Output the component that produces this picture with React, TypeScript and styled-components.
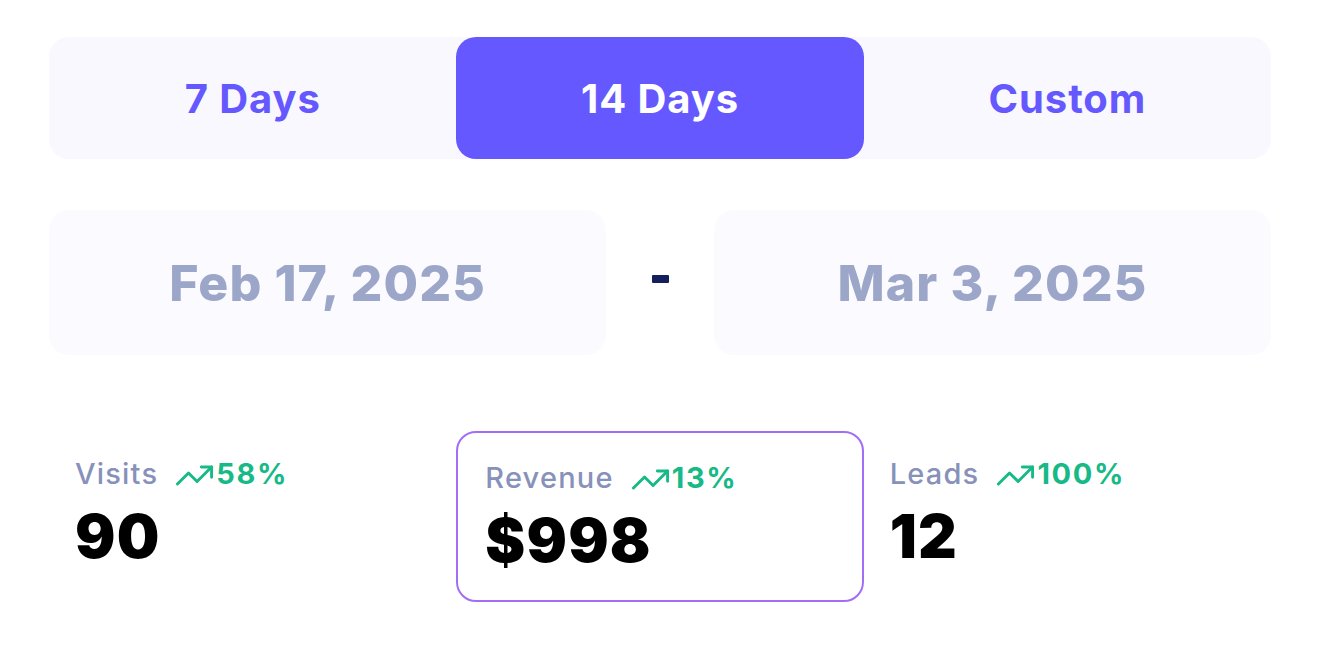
import * as React from "react";
import styled, { createGlobalStyle } from "styled-components";

const GlobalStyle = createGlobalStyle`
  html, body {
    margin: 0;
    padding: 0;
    background: #ffffff;
  }
  body {
    font-family: "Inter", "Noto Sans", sans-serif;
  }
`;

const Page = styled.div`
  display: flex;
  flex-direction: column;
  width: 1222px;
  padding: 37px 0 0 49px;
`;

const TabBar = styled.div`
  display: grid;
  grid-template-columns: repeat(3, 1fr);
  height: 122px;
  background: #f9f8ff;
  border-radius: 20px;
`;

const Tab = styled.div<{ $active?: boolean }>`
  display: flex;
  align-items: center;
  justify-content: center;
  border-radius: 20px;
  font-size: 40px;
  font-weight: 700;
  letter-spacing: 0.9px;
  color: ${(p) => (p.$active ? "#ffffff" : "#6558ff")};
  background: ${(p) => (p.$active ? "#6558ff" : "transparent")};
`;

const DateRow = styled.div`
  display: grid;
  grid-template-columns: 1fr 108px 1fr;
  height: 145px;
  margin-top: 51px;
`;

const DateBox = styled.div`
  display: flex;
  align-items: center;
  justify-content: center;
  background: #fafaff;
  border-radius: 20px;
  font-size: 50px;
  font-weight: 800;
  color: #9ca6c8;
  letter-spacing: 1.1px;
`;

const Dash = styled.div`
  display: flex;
  align-items: center;
  justify-content: center;
  padding-bottom: 8px;
  span {
    display: block;
    width: 17px;
    height: 8px;
    background: #141f5e;
    border-radius: 1px;
  }
`;

const StatsRow = styled.div`
  display: grid;
  grid-template-columns: repeat(3, 1fr);
  margin-top: 76px;
`;

const StatCard = styled.div<{ $active?: boolean }>`
  display: flex;
  flex-direction: column;
  height: 171px;
  box-sizing: border-box;
  padding: ${(p) => (p.$active ? "27px 0 0 27px" : "23px 0 0 24px")};
  border: 2px solid ${(p) => (p.$active ? "#a36ef6" : "transparent")};
  border-radius: 20px;
`;

const LabelRow = styled.div`
  display: flex;
  align-items: center;
  height: 34px;
`;

const Label = styled.span`
  font-size: 29px;
  font-weight: 500;
  letter-spacing: 1.2px;
  color: #8791b9;
  margin-right: 19px;
`;

const Trend = styled.span`
  display: flex;
  align-items: center;
  font-size: 29px;
  font-weight: 700;
  letter-spacing: 1.7px;
  color: #17b987;
  svg {
    margin: 4px 1px 0 -3px;
  }
`;

const Value = styled.div`
  margin-top: 10px;
  font-size: 60px;
  line-height: 72px;
  font-weight: 900;
  color: #000000;
  letter-spacing: 1.2px;
`;

const TrendIcon = () => (
  <svg width="41" height="41" viewBox="0 0 24 24" fill="none" stroke="currentColor" strokeWidth="1.7" strokeLinecap="round" strokeLinejoin="round">
    <polyline points="22 7 13.5 15.5 8.5 10.5 2 17" />
    <polyline points="16 7 22 7 22 13" />
  </svg>
);

const stats = [
  { label: "Visits", change: "58%", value: "90" },
  { label: "Revenue", change: "13%", value: "$998", active: true },
  { label: "Leads", change: "100%", value: "12" },
];

export default function App(): JSX.Element {
  return (
    <>
      <GlobalStyle />
      <Page>
        <TabBar>
          <Tab>7 Days</Tab>
          <Tab $active>14 Days</Tab>
          <Tab>Custom</Tab>
        </TabBar>

        <DateRow>
          <DateBox>Feb 17, 2025</DateBox>
          <Dash>
            <span />
          </Dash>
          <DateBox>Mar 3, 2025</DateBox>
        </DateRow>

        <StatsRow>
          {stats.map((s) => (
            <StatCard key={s.label} $active={s.active}>
              <LabelRow>
                <Label>{s.label}</Label>
                <Trend>
                  <TrendIcon />
                  {s.change}
                </Trend>
              </LabelRow>
              <Value>{s.value}</Value>
            </StatCard>
          ))}
        </StatsRow>
      </Page>
    </>
  );
}
